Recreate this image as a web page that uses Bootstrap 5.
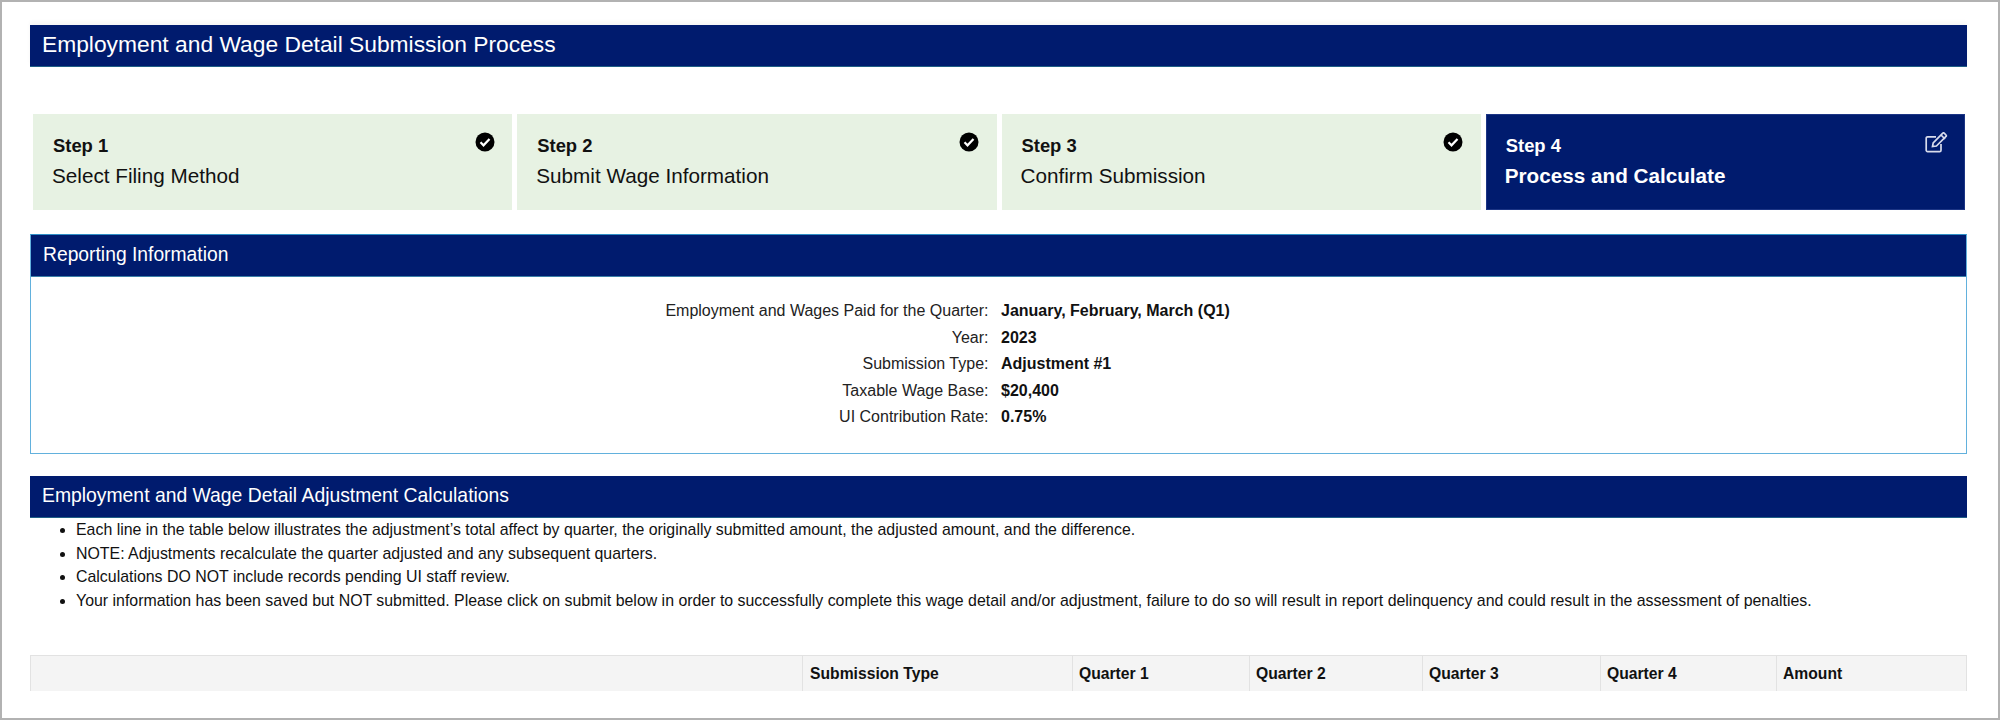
<!DOCTYPE html>
<html lang="en">
<head>
<meta charset="utf-8">
<title>Employment and Wage Detail Submission Process</title>
<link rel="stylesheet" href="https://cdn.jsdelivr.net/npm/bootstrap@5.3.0/dist/css/bootstrap.min.css">
<style>
html,body{margin:0;background:#fff;}
body{font-family:"Liberation Sans",Arial,sans-serif;color:#111;font-size:16px;}
.frame{height:720px;border:2px solid #b2b2b2;padding:23px 31px 26px 28px;overflow:hidden;display:flex;flex-direction:column;}
.navy{background:#001b6e;color:#fff;}
.pagebar{height:42px;padding-left:12px;font-size:22.8px;line-height:38px;border-bottom:1px solid #1f5f86;box-shadow:0 -3px 4px rgba(0,0,0,.04);}
.steps{--bs-gutter-x:5px;margin:47px -.5px 0 .5px;}
.stepbox{height:96px;position:relative;padding:21px 19px;background:#e7f2e3;color:#111;}
.stepbox.now{background:#001b6e;color:#fff;font-weight:700;border:1px solid #1c3585;padding:20px 18px;}
.stepname{font-size:18.4px;font-weight:700;line-height:22px;padding-left:1px;}
.steptext{font-size:20.7px;line-height:22px;margin-top:8px;}
.stepicon{position:absolute;top:18px;right:17.5px;}
.now .stepicon{top:17px;right:16px;}
.panelbox{margin-top:24px;height:220px;border:1px solid #62b1dd;border-top-color:#2f8fc6;}
.panelhead{height:42px;padding-left:12px;font-size:19.3px;line-height:39px;border-bottom:1px solid #3a7fa8;}
.infolist{padding-top:21px;}
.inforow{--bs-gutter-x:0;height:26.5px;line-height:26.5px;font-size:16px;}
.infolabel{text-align:right;padding-right:10px;color:#222;}
.infovalue{padding-left:2.5px;font-weight:700;}
.calcbar{margin-top:22px;height:42px;padding-left:12px;font-size:19.35px;line-height:39px;border-bottom:1px solid #1f5f86;}
.notes{margin:0;padding-left:46px;font-size:15.9px;line-height:23.6px;height:137px;}
.tablewrap{height:36px;overflow:hidden;}
.headtable{table-layout:fixed;width:100%;margin:0;border-collapse:collapse;}
.headtable th{height:36px;background:#f4f4f4;border:1px solid #e2e2e2;border-bottom:0;padding:0 6px;font-size:15.7px;font-weight:700;color:#111;vertical-align:middle;}
.headtable th:nth-child(2){padding-left:7px;}
</style>
</head>
<body>
<div class="frame">
  <div class="navy pagebar">Employment and Wage Detail Submission Process</div>

  <div class="row steps">
    <div class="col-3"><div class="stepbox">
      <div class="stepname">Step 1</div><div class="steptext">Select Filing Method</div>
      <svg class="stepicon" width="20" height="20" viewBox="0 0 20 20"><circle cx="10" cy="10" r="9.5" fill="#000"/><path d="M5.5 10.3l3 3 6-6.4" fill="none" stroke="#fff" stroke-width="2.2"/></svg>
    </div></div>
    <div class="col-3"><div class="stepbox">
      <div class="stepname">Step 2</div><div class="steptext">Submit Wage Information</div>
      <svg class="stepicon" width="20" height="20" viewBox="0 0 20 20"><circle cx="10" cy="10" r="9.5" fill="#000"/><path d="M5.5 10.3l3 3 6-6.4" fill="none" stroke="#fff" stroke-width="2.2"/></svg>
    </div></div>
    <div class="col-3"><div class="stepbox">
      <div class="stepname">Step 3</div><div class="steptext">Confirm Submission</div>
      <svg class="stepicon" width="20" height="20" viewBox="0 0 20 20"><circle cx="10" cy="10" r="9.5" fill="#000"/><path d="M5.5 10.3l3 3 6-6.4" fill="none" stroke="#fff" stroke-width="2.2"/></svg>
    </div></div>
    <div class="col-3"><div class="stepbox now">
      <div class="stepname">Step 4</div><div class="steptext">Process and Calculate</div>
      <svg class="stepicon" width="23" height="21" viewBox="0 0 23 21" fill="none" stroke="#d8dcec" stroke-width="1.7"><path d="M16 12v6.2a1.4 1.4 0 0 1-1.4 1.4H2.6a1.4 1.4 0 0 1-1.4-1.4V6.2a1.4 1.4 0 0 1 1.4-1.4H11"/><path d="M7.5 14.5l.7-3.7L17.8 1.2a1 1 0 0 1 1.4 0l1.8 1.8a1 1 0 0 1 0 1.4l-9.6 9.6z"/><path d="M16 3l4 4"/></svg>
    </div></div>
  </div>

  <div class="panelbox">
    <div class="navy panelhead">Reporting Information</div>
    <div class="infolist">
      <div class="row inforow"><div class="col-6 infolabel">Employment and Wages Paid for the Quarter:</div><div class="col-6 infovalue">January, February, March (Q1)</div></div>
      <div class="row inforow"><div class="col-6 infolabel">Year:</div><div class="col-6 infovalue">2023</div></div>
      <div class="row inforow"><div class="col-6 infolabel">Submission Type:</div><div class="col-6 infovalue">Adjustment #1</div></div>
      <div class="row inforow"><div class="col-6 infolabel">Taxable Wage Base:</div><div class="col-6 infovalue">$20,400</div></div>
      <div class="row inforow"><div class="col-6 infolabel">UI Contribution Rate:</div><div class="col-6 infovalue">0.75%</div></div>
    </div>
  </div>

  <div class="navy calcbar">Employment and Wage Detail Adjustment Calculations</div>
  <ul class="notes">
    <li>Each line in the table below illustrates the adjustment’s total affect by quarter, the originally submitted amount, the adjusted amount, and the difference.</li>
    <li>NOTE: Adjustments recalculate the quarter adjusted and any subsequent quarters.</li>
    <li>Calculations DO NOT include records pending UI staff review.</li>
    <li>Your information has been saved but NOT submitted. Please click on submit below in order to successfully complete this wage detail and/or adjustment, failure to do so will result in report delinquency and could result in the assessment of penalties.</li>
  </ul>

  <div class="tablewrap">
    <table class="headtable">
      <colgroup><col style="width:772px"><col style="width:270px"><col style="width:177px"><col style="width:173px"><col style="width:178px"><col style="width:176px"><col></colgroup>
      <thead><tr><th></th><th>Submission Type</th><th>Quarter 1</th><th>Quarter 2</th><th>Quarter 3</th><th>Quarter 4</th><th>Amount</th></tr></thead>
    </table>
  </div>
</div>
</body>
</html>
